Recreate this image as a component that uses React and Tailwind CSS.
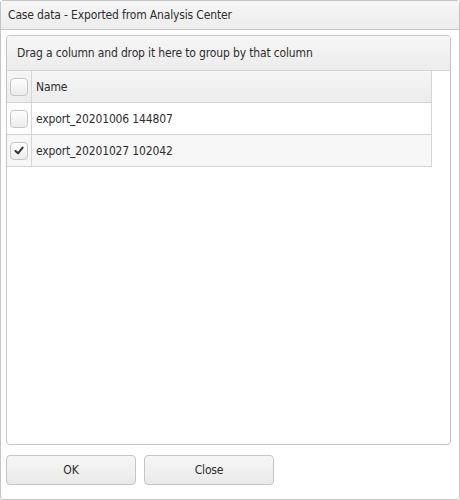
const rows = [
  { name: "export_20201006 144807", checked: false },
  { name: "export_20201027 102042", checked: true },
];

function Checkbox({ checked }) {
  return (
    <span className="flex h-[18px] w-[18px] items-center justify-center rounded-[4px] border border-[#c5c5c5] bg-gradient-to-b from-white to-[#ececec]">
      {checked && (
        <svg width="10" height="9" viewBox="0 0 10 9">
          <path d="M1.5 5 L4 7.3 L8.6 1.6" fill="none" stroke="#333" strokeWidth="2" strokeLinecap="round" strokeLinejoin="round" />
        </svg>
      )}
    </span>
  );
}

export default function App() {
  return (
    <div
      className="flex h-[500px] w-[460px] flex-col rounded-[3px] border border-[#c5c5c5] bg-white text-[12px] tracking-[-0.15px] text-[#2e2e2e]"
      style={{ fontFamily: '"DejaVu Sans Condensed", "DejaVu Sans", sans-serif' }}
    >
      {/* title bar */}
      <div className="flex h-[29px] items-center border-b border-[#c5c5c5] bg-gradient-to-b from-[#f6f6f6] to-[#ededed] px-[7px]">
        Case data - Exported from Analysis Center
      </div>

      <div className="flex flex-1 flex-col pt-[5px] pl-[5px] pr-[8px] pb-[14px]">
        {/* grid */}
        <div className="flex h-[410px] flex-col overflow-hidden rounded-[4px] border border-[#c5c5c5]">
          <div className="flex h-[35px] items-center border-b border-[#d5d5d5] bg-gradient-to-b from-[#f6f6f6] to-[#ececec] px-[10px]">
            Drag a column and drop it here to group by that column
          </div>
          <div className="flex">
            <div className="w-[425px] border-r border-[#d5d5d5]">
              <div className="flex h-[32px] border-b border-[#d5d5d5] bg-gradient-to-b from-[#f6f6f6] to-[#ececec]">
                <div className="flex w-[25px] items-center justify-end border-r border-[#d5d5d5] pr-[3px]">
                  <Checkbox checked={false} />
                </div>
                <div className="flex items-center pl-[4px]">Name</div>
              </div>
              {rows.map((r, i) => (
                <div key={r.name} className={`flex h-[32px] border-b border-[#d5d5d5] ${i % 2 ? "bg-[#f7f7f7]" : "bg-white"}`}>
                  <div className="flex w-[25px] items-center justify-end border-r border-[#d5d5d5] pr-[3px]">
                    <Checkbox checked={r.checked} />
                  </div>
                  <div className="flex items-center pl-[4px]">{r.name}</div>
                </div>
              ))}
            </div>
          </div>
        </div>

        {/* buttons */}
        <div className="mt-[10px] flex gap-[8px]">
          <button className="h-[30px] w-[130px] rounded-[4px] border border-[#c5c5c5] bg-gradient-to-b from-[#f6f6f6] to-[#e9e9e9] text-[12px]">OK</button>
          <button className="h-[30px] w-[130px] rounded-[4px] border border-[#c5c5c5] bg-gradient-to-b from-[#f6f6f6] to-[#e9e9e9] text-[12px]">Close</button>
        </div>
      </div>
    </div>
  );
}
